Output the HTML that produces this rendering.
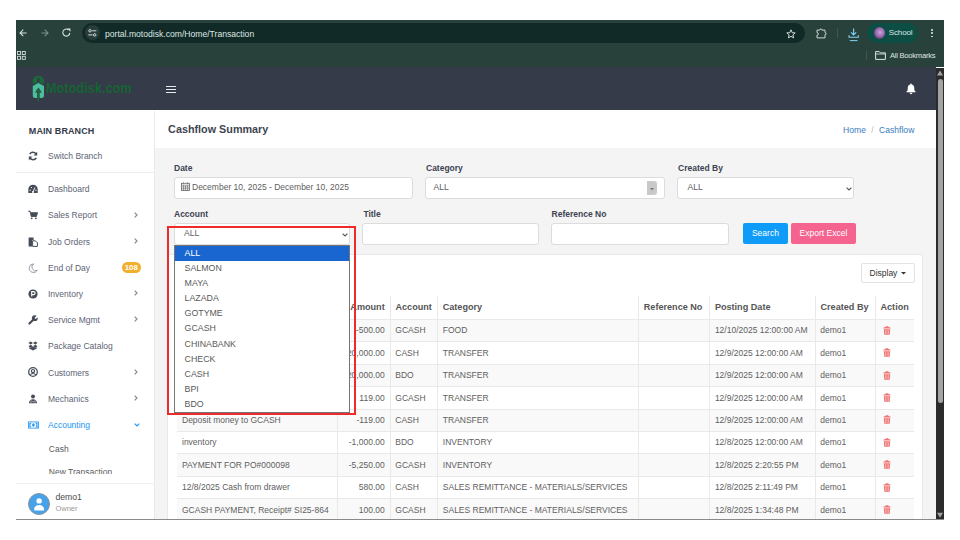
<!DOCTYPE html>
<html><head><meta charset="utf-8">
<style>
*{box-sizing:border-box;margin:0;padding:0}
html,body{width:960px;height:540px;overflow:hidden;background:#fff}
body{position:relative;font-family:"Liberation Sans",sans-serif}
.a{position:absolute}
.t{position:absolute;white-space:nowrap;line-height:1}
svg{position:absolute;overflow:visible}
</style></head><body>

<div class="a" style="left:16px;top:20px;width:928px;height:47.2px;background:#28413b;"></div>
<div class="a" style="left:82px;top:22.5px;width:723px;height:20px;background:#112a27;border-radius:10px;"></div>
<div class="a" style="left:84.5px;top:25px;width:15px;height:15px;background:#283d39;border-radius:50%;"></div>
<div class="t" style="left:105.00px;top:29.66px;font-size:8.6px;color:#dde5e2;">portal.motodisk.com/Home/Transaction</div>

<svg style="left:18.5px;top:28.5px" width="8" height="8" viewBox="0 0 8 8"><path d="M7.6 3.9H1.2M4.3 0.7L1 3.9L4.3 7.1" fill="none" stroke="#d9e2de" stroke-width="1.05"/></svg>
<svg style="left:40.5px;top:28.5px" width="8" height="8" viewBox="0 0 8 8"><path d="M0.4 3.9H6.8M3.7 0.7L7 3.9L3.7 7.1" fill="none" stroke="#7f928c" stroke-width="1.05"/></svg>
<svg style="left:62px;top:28.3px" width="9" height="9" viewBox="0 0 9 9"><path d="M7.8 4.9A3.5 3.5 0 1 1 6.3 1.7" fill="none" stroke="#d9e2de" stroke-width="1.1"/><path d="M5 0.4H8.4V3.8Z" fill="#d9e2de"/></svg>
<svg style="left:88.3px;top:29.3px" width="9" height="8" viewBox="0 0 9 8"><circle cx="2" cy="1.8" r="1.25" fill="none" stroke="#dfe6e3" stroke-width="0.9"/><path d="M4.2 1.8H8.4M0.3 5.9H4.6" stroke="#dfe6e3" stroke-width="0.95"/><circle cx="6.7" cy="5.9" r="1.25" fill="none" stroke="#dfe6e3" stroke-width="0.9"/></svg>
<svg style="left:785.5px;top:28.5px" width="10" height="10" viewBox="0 0 10 10"><path d="M5 0.8L6.2 3.7L9.2 3.9L6.9 5.9L7.6 8.9L5 7.3L2.4 8.9L3.1 5.9L0.8 3.9L3.8 3.7Z" fill="none" stroke="#e4ebe8" stroke-width="0.9" stroke-linejoin="round"/></svg>
<svg style="left:815.8px;top:27.5px" width="10" height="11" viewBox="0 0 10 11"><path d="M1 2.1H3.7A1.1 1.1 0 0 1 5.9 2.1H9V4.6A1.1 1.1 0 0 1 9 6.8V9.9H1V7.2A1.3 1.3 0 0 0 1 4.6Z" fill="none" stroke="#d5ded9" stroke-width="0.95" stroke-linejoin="round"/></svg>
<div class="a" style="left:837px;top:28px;width:1px;height:10px;background:#41564f"></div>
<svg style="left:848px;top:27.5px" width="12" height="14" viewBox="0 0 12 14"><path d="M5.6 0.6V6.8M3 4.3L5.6 6.9L8.2 4.3" fill="none" stroke="#7fd4f5" stroke-width="1.1"/><path d="M1 7.2V9.3H10.3V7.2" fill="none" stroke="#7fd4f5" stroke-width="1.1"/><path d="M1.8 12.6H9.5" stroke="#7fd4f5" stroke-width="1"/></svg>
<div class="a" style="left:867px;top:22.5px;width:51px;height:20.3px;border-radius:10px;background:#0c4e44"></div>
<div class="a" style="left:873.7px;top:26.5px;width:11.8px;height:12.3px;border-radius:50%;background:radial-gradient(circle at 55% 45%,#c9a6d8 0,#9a6cb3 45%,#6a3c6e 75%,#8a2838 100%)"></div>
<div class="a" style="left:930.8px;top:28.9px;width:1.8px;height:1.8px;border-radius:50%;background:#e4ebe8"></div>
<div class="a" style="left:930.8px;top:32.2px;width:1.8px;height:1.8px;border-radius:50%;background:#e4ebe8"></div>
<div class="a" style="left:930.8px;top:35.5px;width:1.8px;height:1.8px;border-radius:50%;background:#e4ebe8"></div>
<svg style="left:17px;top:51px" width="9" height="9" viewBox="0 0 9 9"><rect x="0.5" y="0.5" width="3" height="3" fill="none" stroke="#d5ddd9" stroke-width="0.9"/><rect x="5.3" y="0.5" width="3" height="3" fill="none" stroke="#d5ddd9" stroke-width="0.9"/><rect x="0.5" y="5.3" width="3" height="3" fill="none" stroke="#d5ddd9" stroke-width="0.9"/><rect x="5.3" y="5.3" width="3" height="3" fill="none" stroke="#d5ddd9" stroke-width="0.9"/></svg>
<div class="a" style="left:865.5px;top:51px;width:1px;height:9px;background:#41564f"></div>
<svg style="left:874.5px;top:51px" width="11" height="9" viewBox="0 0 11 9"><path d="M0.6 0.6h3.6l1.2 1.3h5v6.5H0.6Z" fill="none" stroke="#dfe6e3" stroke-width="1"/><path d="M0.6 3h9.8" stroke="#dfe6e3" stroke-width="0.8"/></svg>

<div class="t" style="left:888.80px;top:28.96px;font-size:8.0px;color:#d9e6e1;letter-spacing:-0.15px;">School</div>
<div class="t" style="left:890.00px;top:52.16px;font-size:7.6px;color:#dfe6e3;letter-spacing:-0.25px;">All Bookmarks</div>
<div class="a" style="left:16px;top:67.2px;width:920px;height:43.3px;background:#363b4a;"></div>
<svg style="left:32px;top:75px" width="13" height="27" viewBox="0 0 13 27">
<path d="M0.8 9.3V5.6C0.8 3 3.5 0.8 6.4 0.8C9.3 0.8 12 3 12 5.6V9.3L6.4 7.2Z" fill="#1a6a3a"/>
<path d="M5.1 7.3V3.9A1.3 1.3 0 0 1 7.7 3.9V7.3Z" fill="#363b4a"/>
<path d="M0.8 10.9L6.4 8.1L12 10.9V20.8C12 22.3 10.9 23 9.5 23H3.3C1.9 23 0.8 22.3 0.8 20.8Z" fill="#4bbf9c"/>
<path d="M6.4 12.5L3 17.4H5.2V26.3H7.6V17.4H9.8Z" fill="#363b4a"/>
<path d="M6.4 13.3L3.9 16.9H5.7V26.3H7.1V16.9H8.9Z" fill="#1a6a3a"/>
</svg>
<div class="t" style="left:46.4px;top:79.5px;font-size:15.5px;font-weight:bold;color:#156434;transform:scaleX(0.805);transform-origin:0 0;letter-spacing:0.2px">Motodisk.com</div>
<div class="a" style="left:166px;top:85.8px;width:10px;height:1.6px;background:#e8eaee;"></div>
<div class="a" style="left:166px;top:88.8px;width:10px;height:1.6px;background:#e8eaee;"></div>
<div class="a" style="left:166px;top:91.8px;width:10px;height:1.6px;background:#e8eaee;"></div>
<svg style="left:906px;top:83px" width="10" height="11" viewBox="0 0 10 11"><path d="M5 0.6C5.5 0.6 5.8 1 5.8 1.4C7.6 1.8 8.3 3.3 8.3 5V7.3L9.6 8.8V9.3H0.4V8.8L1.7 7.3V5C1.7 3.3 2.4 1.8 4.2 1.4C4.2 1 4.5 0.6 5 0.6Z" fill="#fff"/><path d="M3.6 9.8h2.8A1.4 1.4 0 0 1 3.6 9.8Z" fill="#fff"/></svg>
<div class="a" style="left:16px;top:110.5px;width:139px;height:408.5px;background:#fff;border-right:1px solid #e9e9e9;"></div>
<div class="t" style="left:28.80px;top:126.65px;font-size:9px;font-weight:bold;color:#343a47;letter-spacing:0.1px;">MAIN BRANCH</div>
<div class="t" style="left:48.00px;top:151.51px;font-size:8.5px;color:#5d6475;">Switch Branch</div>
<div class="a" style="left:16px;top:172px;width:139px;height:1px;background:#ececec;"></div>
<div class="t" style="left:48.00px;top:184.91px;font-size:8.5px;color:#5d6475;">Dashboard</div>
<div class="t" style="left:48.00px;top:211.21px;font-size:8.5px;color:#5d6475;">Sales Report</div>
<svg style="left:134px;top:211.50px" width="4" height="6" viewBox="0 0 4 6"><path d="M0.7 0.7L3 3L0.7 5.3" fill="none" stroke="#858b96" stroke-width="1.2"/></svg>
<div class="t" style="left:48.00px;top:237.61px;font-size:8.5px;color:#5d6475;">Job Orders</div>
<svg style="left:134px;top:237.90px" width="4" height="6" viewBox="0 0 4 6"><path d="M0.7 0.7L3 3L0.7 5.3" fill="none" stroke="#858b96" stroke-width="1.2"/></svg>
<div class="t" style="left:48.00px;top:263.91px;font-size:8.5px;color:#5d6475;">End of Day</div>
<div class="t" style="left:48.00px;top:290.11px;font-size:8.5px;color:#5d6475;">Inventory</div>
<svg style="left:134px;top:290.40px" width="4" height="6" viewBox="0 0 4 6"><path d="M0.7 0.7L3 3L0.7 5.3" fill="none" stroke="#858b96" stroke-width="1.2"/></svg>
<div class="t" style="left:48.00px;top:316.11px;font-size:8.5px;color:#5d6475;">Service Mgmt</div>
<svg style="left:134px;top:316.40px" width="4" height="6" viewBox="0 0 4 6"><path d="M0.7 0.7L3 3L0.7 5.3" fill="none" stroke="#858b96" stroke-width="1.2"/></svg>
<div class="t" style="left:48.00px;top:342.31px;font-size:8.5px;color:#5d6475;">Package Catalog</div>
<div class="t" style="left:48.00px;top:368.51px;font-size:8.5px;color:#5d6475;">Customers</div>
<svg style="left:134px;top:368.80px" width="4" height="6" viewBox="0 0 4 6"><path d="M0.7 0.7L3 3L0.7 5.3" fill="none" stroke="#858b96" stroke-width="1.2"/></svg>
<div class="t" style="left:48.00px;top:394.61px;font-size:8.5px;color:#5d6475;">Mechanics</div>
<svg style="left:134px;top:394.90px" width="4" height="6" viewBox="0 0 4 6"><path d="M0.7 0.7L3 3L0.7 5.3" fill="none" stroke="#858b96" stroke-width="1.2"/></svg>
<svg style="left:28.20px;top:150.80px" width="10" height="10" viewBox="0 0 10 10"><path d="M8.3 3.6A3.7 3.7 0 0 0 1.7 3.2M1.7 6.4A3.7 3.7 0 0 0 8.3 6.8" fill="none" stroke="#464c58" stroke-width="1.5"/><path d="M9.2 0.8V4.4H5.6Z M0.8 9.2V5.6H4.4Z" fill="#464c58"/></svg>
<svg style="left:28.20px;top:183.60px" width="10" height="10" viewBox="0 0 10 10"><path d="M0.3 9V5.4A4.7 4.7 0 0 1 9.7 5.4V9Z" fill="#464c58"/><path d="M5 8.2L6.8 3.6" stroke="#fff" stroke-width="0.9"/><circle cx="5" cy="8" r="1" fill="#fff"/><circle cx="2.2" cy="6.2" r="0.6" fill="#fff"/><circle cx="3.4" cy="3.5" r="0.6" fill="#fff"/><circle cx="7.9" cy="6.2" r="0.6" fill="#fff"/></svg>
<svg style="left:28.20px;top:210.00px" width="10" height="10" viewBox="0 0 10 10"><path d="M0.3 1.2H2.1L3.2 6.5H8.4L9.5 2.7H2.6" fill="#464c58" stroke="#464c58" stroke-width="0.9"/><circle cx="3.7" cy="8.3" r="0.9" fill="#464c58"/><circle cx="7.9" cy="8.3" r="0.9" fill="#464c58"/></svg>
<svg style="left:28.20px;top:236.50px" width="10" height="10" viewBox="0 0 10 10"><path d="M0.6 0.6H5.6V3.2H4V9.4H0.6Z" fill="#464c58"/><path d="M4.6 3.8H7.4L9.4 5.8V9.4H4.6Z" fill="none" stroke="#464c58" stroke-width="1"/></svg>
<svg style="left:28.20px;top:262.80px" width="10" height="10" viewBox="0 0 10 10"><path d="M5.8 0.9A4.3 4.3 0 1 0 9.3 7.3A3.6 3.6 0 0 1 5.8 0.9Z" fill="none" stroke="#8d929c" stroke-width="0.9"/></svg>
<svg style="left:28.20px;top:288.90px" width="10" height="10" viewBox="0 0 10 10"><circle cx="5" cy="5" r="4.6" fill="#464c58"/><path d="M3.7 7.6V2.6H5.6A1.5 1.5 0 0 1 5.6 5.6H3.7" fill="none" stroke="#fff" stroke-width="1.1"/></svg>
<svg style="left:28.20px;top:314.90px" width="10" height="10" viewBox="0 0 10 10"><path d="M1.4 8.6L5 5" stroke="#464c58" stroke-width="2.1" stroke-linecap="round"/><circle cx="6.8" cy="3.2" r="2.9" fill="#464c58"/><path d="M6.6 2.9L8.9 0.2L10.4 1.7L7.7 4Z" fill="#fff"/></svg>
<svg style="left:28.20px;top:341.20px" width="10" height="10" viewBox="0 0 10 10"><path d="M2.7 0.6L5 2.1L2.7 3.6L0.4 2.1Z M7.3 0.6L9.6 2.1L7.3 3.6L5 2.1Z M2.7 3.8L5 5.3L2.7 6.8L0.4 5.3Z M7.3 3.8L9.6 5.3L7.3 6.8L5 5.3Z M5 5.7L7.2 7.1L5 8.6L2.8 7.1Z" fill="#464c58"/><path d="M1.2 6.6V7.4L5 9.5L8.8 7.4V6.6" fill="#464c58"/></svg>
<svg style="left:28.20px;top:367.30px" width="10" height="10" viewBox="0 0 10 10"><circle cx="5" cy="5" r="4.3" fill="none" stroke="#464c58" stroke-width="1.3"/><circle cx="5" cy="4.1" r="1.6" fill="none" stroke="#464c58" stroke-width="1.2"/><path d="M2.3 8.1C2.9 6.9 3.8 6.5 5 6.5S7.1 6.9 7.7 8.1" fill="none" stroke="#464c58" stroke-width="1.2"/></svg>
<svg style="left:28.20px;top:393.50px" width="10" height="10" viewBox="0 0 10 10"><circle cx="5" cy="2.6" r="2" fill="#464c58"/><path d="M1 9.3C1 6.8 2.6 5.3 5 5.3S9 6.8 9 9.3Z" fill="#464c58"/><path d="M3 6.2v2.6M7 6.2v2.6M4.2 7.6h1.6" stroke="#fff" stroke-width="0.6"/></svg>
<svg style="left:27.70px;top:420.20px" width="11" height="10" viewBox="0 0 11 10"><rect x="0" y="1.5" width="10.8" height="7" fill="#2196f3"/><ellipse cx="5.4" cy="5" rx="3" ry="2.6" fill="#fff"/><ellipse cx="5.4" cy="5" rx="1.3" ry="1.8" fill="#2196f3"/><rect x="1.1" y="2.6" width="8.6" height="4.8" fill="none" stroke="#fff" stroke-width="0.5"/></svg>
<div class="a" style="left:122px;top:262.3px;width:18.5px;height:11.2px;background:#f2ae2d;border-radius:6px;"></div>
<div class="t" style="left:122px;top:264.11px;width:18.5px;text-align:center;font-size:7.8px;font-weight:bold;color:#fff">108</div>
<div class="t" style="left:48.00px;top:421.11px;font-size:8.5px;color:#2196f3;">Accounting</div>
<svg style="left:133.5px;top:423px" width="6" height="4" viewBox="0 0 6 4"><path d="M0.7 0.7L3 3L5.3 0.7" fill="none" stroke="#2196f3" stroke-width="1.2"/></svg>
<div class="t" style="left:48.80px;top:445.21px;font-size:8.5px;color:#5a5a5a;">Cash</div>
<div class="a" style="left:16px;top:466px;width:139px;height:7.8px;overflow:hidden"><div class="t" style="left:32.80px;top:1.81px;font-size:8.5px;color:#5a5a5a;">New Transaction</div></div>
<div class="a" style="left:16px;top:482.5px;width:139px;height:1px;background:#efefef;"></div>
<div class="a" style="left:27.6px;top:492.7px;width:22.2px;height:22.2px;border-radius:50%;background:#48a2e9;border:1px solid #8d939b;overflow:hidden"><svg style="left:0;top:0" width="20" height="20" viewBox="0 0 20 20"><circle cx="10.1" cy="6.9" r="2.7" fill="#fff"/><path d="M5.2 16.6V15C5.2 12.8 7.2 11.1 10.1 11.1S15 12.8 15 15V16.6Z" fill="#fff"/></svg></div>
<div class="t" style="left:55.40px;top:493.41px;font-size:8.7px;color:#4e4e4e;">demo1</div>
<div class="t" style="left:55.40px;top:504.61px;font-size:7.5px;color:#999;">Owner</div>
<div class="a" style="left:155px;top:110.5px;width:781px;height:37.6px;background:#fff;"></div>
<div class="a" style="left:155px;top:148.1px;width:781px;height:370.9px;background:#f4f4f4;"></div>
<div class="t" style="left:168.10px;top:124.25px;font-size:10.8px;font-weight:bold;color:#40464f;">Cashflow Summary</div>
<div class="t" style="left:843.00px;top:126.26px;font-size:8.6px;color:#3a7cc0;">Home</div>
<div class="t" style="left:871.20px;top:126.26px;font-size:8.6px;color:#b9b9b9;">/</div>
<div class="t" style="left:879.00px;top:126.26px;font-size:8.6px;color:#3a7cc0;">Cashflow</div>
<div class="t" style="left:174.00px;top:163.91px;font-size:8.5px;font-weight:bold;color:#3c4352;">Date</div>
<div class="t" style="left:426.00px;top:163.91px;font-size:8.5px;font-weight:bold;color:#3c4352;">Category</div>
<div class="t" style="left:678.00px;top:163.91px;font-size:8.5px;font-weight:bold;color:#3c4352;">Created By</div>
<div class="t" style="left:174.00px;top:210.11px;font-size:8.5px;font-weight:bold;color:#3c4352;">Account</div>
<div class="t" style="left:363.40px;top:210.11px;font-size:8.5px;font-weight:bold;color:#3c4352;">Title</div>
<div class="t" style="left:551.60px;top:210.11px;font-size:8.5px;font-weight:bold;color:#3c4352;">Reference No</div>
<div class="a" style="left:174px;top:177px;width:239px;height:21.5px;background:#fff;border:1px solid #dcdcdc;border-radius:3px;"></div>
<div class="a" style="left:425.2px;top:177px;width:239.8px;height:21.5px;background:#fff;border:1px solid #dcdcdc;border-radius:3px;"></div>
<div class="a" style="left:677.2px;top:177px;width:176.8px;height:21.5px;background:#fff;border:1px solid #dcdcdc;border-radius:3px;"></div>
<div class="a" style="left:173.9px;top:222.7px;width:176.6px;height:22.3px;background:#fff;border:1px solid #dcdcdc;border-radius:3px;"></div>
<div class="a" style="left:362.2px;top:222.8px;width:177.3px;height:22.2px;background:#fff;border:1px solid #dcdcdc;border-radius:3px;"></div>
<div class="a" style="left:551.2px;top:222.8px;width:177.4px;height:22.2px;background:#fff;border:1px solid #dcdcdc;border-radius:3px;"></div>
<svg style="left:181.3px;top:182.3px" width="9" height="9" viewBox="0 0 9 9"><rect x="0.5" y="1.3" width="8" height="7.2" fill="none" stroke="#666" stroke-width="0.8"/><path d="M0.5 3.2h8M2.5 0.3v2M6.5 0.3v2M0.5 5h8M0.5 6.8h8M2.5 3.2v5.3M4.5 3.2v5.3M6.5 3.2v5.3" stroke="#666" stroke-width="0.6"/></svg>
<div class="t" style="left:192.00px;top:182.51px;font-size:8.5px;color:#606060;">December 10, 2025 - December 10, 2025</div>
<div class="t" style="left:433.50px;top:182.66px;font-size:8.6px;color:#606060;">ALL</div>
<div class="a" style="left:646.6px;top:181px;width:10.6px;height:13.5px;background:#c9c9c9;border-radius:0 3px 3px 0;"></div>
<svg style="left:649.9px;top:188.2px" width="4" height="3" viewBox="0 0 4 3"><path d="M0 0h4L2 2.6z" fill="#7a7a7a"/></svg>
<div class="t" style="left:687.60px;top:182.66px;font-size:8.6px;color:#606060;">ALL</div>
<svg style="left:845.8px;top:186.6px" width="6" height="4" viewBox="0 0 6 4"><path d="M0.6 0.7L3 3L5.4 0.7" fill="none" stroke="#555" stroke-width="1.1"/></svg>
<svg style="left:342px;top:232.8px" width="6" height="4" viewBox="0 0 6 4"><path d="M0.6 0.7L3 3L5.4 0.7" fill="none" stroke="#555" stroke-width="1.1"/></svg>
<div class="t" style="left:184.00px;top:229.26px;font-size:8.6px;color:#606060;">ALL</div>
<div class="a" style="left:743px;top:223.4px;width:44.8px;height:20.4px;background:#0f9cf9;border-radius:2px;"></div>
<div class="t" style="left:743px;top:229.31px;width:44.8px;text-align:center;font-size:8.5px;color:#fff">Search</div>
<div class="a" style="left:790.6px;top:223.4px;width:65.7px;height:20.4px;background:#f5638f;border-radius:2px;"></div>
<div class="t" style="left:790.6px;top:229.31px;width:65.7px;text-align:center;font-size:8.5px;color:#fff">Export Excel</div>
<div class="a" style="left:167px;top:254.2px;width:756px;height:270px;background:#fff;border:1px solid #e8e8e8;border-radius:3px;"></div>
<div class="a" style="left:861.3px;top:263.3px;width:53.3px;height:19.8px;background:#fff;border:1px solid #e3e3e3;border-radius:2px;"></div>
<div class="t" style="left:869.50px;top:269.01px;font-size:8.5px;color:#333;">Display</div>
<svg style="left:900.5px;top:272px" width="5" height="3" viewBox="0 0 5 3"><path d="M0 0h5L2.5 2.5z" fill="#333"/></svg>
<div class="a" style="left:177px;top:319.5px;width:737.4px;height:22.4px;background:#f9f9f9;"></div>
<div class="a" style="left:177px;top:364.3px;width:737.4px;height:22.4px;background:#f9f9f9;"></div>
<div class="a" style="left:177px;top:409.1px;width:737.4px;height:22.4px;background:#f9f9f9;"></div>
<div class="a" style="left:177px;top:453.9px;width:737.4px;height:22.4px;background:#f9f9f9;"></div>
<div class="a" style="left:177px;top:498.7px;width:737.4px;height:22.4px;background:#f9f9f9;"></div>
<div class="a" style="left:177px;top:319.0px;width:737.4px;height:1px;background:#e9e9e9;"></div>
<div class="a" style="left:177px;top:341.4px;width:737.4px;height:1px;background:#e9e9e9;"></div>
<div class="a" style="left:177px;top:363.8px;width:737.4px;height:1px;background:#e9e9e9;"></div>
<div class="a" style="left:177px;top:386.2px;width:737.4px;height:1px;background:#e9e9e9;"></div>
<div class="a" style="left:177px;top:408.6px;width:737.4px;height:1px;background:#e9e9e9;"></div>
<div class="a" style="left:177px;top:431.0px;width:737.4px;height:1px;background:#e9e9e9;"></div>
<div class="a" style="left:177px;top:453.4px;width:737.4px;height:1px;background:#e9e9e9;"></div>
<div class="a" style="left:177px;top:475.79999999999995px;width:737.4px;height:1px;background:#e9e9e9;"></div>
<div class="a" style="left:177px;top:498.2px;width:737.4px;height:1px;background:#e9e9e9;"></div>
<div class="a" style="left:177px;top:520.6px;width:737.4px;height:1px;background:#e9e9e9;"></div>
<div class="a" style="left:337.0px;top:295.5px;width:1px;height:234.5px;background:#e9e9e9;"></div>
<div class="a" style="left:389.8px;top:295.5px;width:1px;height:234.5px;background:#e9e9e9;"></div>
<div class="a" style="left:437.0px;top:295.5px;width:1px;height:234.5px;background:#e9e9e9;"></div>
<div class="a" style="left:638.1px;top:295.5px;width:1px;height:234.5px;background:#e9e9e9;"></div>
<div class="a" style="left:709.2px;top:295.5px;width:1px;height:234.5px;background:#e9e9e9;"></div>
<div class="a" style="left:814.8px;top:295.5px;width:1px;height:234.5px;background:#e9e9e9;"></div>
<div class="a" style="left:874.8px;top:295.5px;width:1px;height:234.5px;background:#e9e9e9;"></div>
<div class="t" style="left:182.20px;top:303.00px;font-size:9.1px;font-weight:bold;color:#555;">Description</div>
<div class="t" style="right:575.30px;top:303.00px;font-size:9.1px;font-weight:bold;color:#555;">Amount</div>
<div class="t" style="left:395.50px;top:303.00px;font-size:9.1px;font-weight:bold;color:#555;">Account</div>
<div class="t" style="left:442.70px;top:303.00px;font-size:9.1px;font-weight:bold;color:#555;">Category</div>
<div class="t" style="left:643.80px;top:303.00px;font-size:9.1px;font-weight:bold;color:#555;">Reference No</div>
<div class="t" style="left:714.90px;top:303.00px;font-size:9.1px;font-weight:bold;color:#555;">Posting Date</div>
<div class="t" style="left:820.50px;top:303.00px;font-size:9.1px;font-weight:bold;color:#555;">Created By</div>
<div class="t" style="left:880.50px;top:303.00px;font-size:9.1px;font-weight:bold;color:#555;">Action</div>
<div class="t" style="left:182.00px;top:326.31px;font-size:8.5px;color:#606060;">Deposit money to GCASH</div>
<div class="t" style="right:575.30px;top:326.31px;font-size:8.5px;color:#606060;">-500.00</div>
<div class="t" style="left:395.30px;top:326.31px;font-size:8.5px;color:#606060;">GCASH</div>
<div class="t" style="left:442.80px;top:326.31px;font-size:8.5px;color:#606060;">FOOD</div>
<div class="t" style="left:714.90px;top:326.31px;font-size:8.5px;color:#606060;">12/10/2025 12:00:00 AM</div>
<div class="t" style="left:820.30px;top:326.31px;font-size:8.5px;color:#606060;">demo1</div>
<svg style="left:882.8px;top:325.70px" width="8" height="9" viewBox="0 0 8 9"><path d="M0.2 2.6Q0.3 1.1 2.4 1.1L2.9 0.2H5.1L5.6 1.1Q7.7 1.1 7.8 2.6Z" fill="#f07474"/><path d="M0.8 3.2H7.2L6.7 8.8H1.3Z" fill="#f07474"/><path d="M2.5 4.2V7.9M4 4.2V7.9M5.5 4.2V7.9" stroke="#fbd4d4" stroke-width="0.55"/></svg>
<div class="t" style="left:182.00px;top:348.71px;font-size:8.5px;color:#606060;">Withdraw from CASH</div>
<div class="t" style="right:575.30px;top:348.71px;font-size:8.5px;color:#606060;">-20,000.00</div>
<div class="t" style="left:395.30px;top:348.71px;font-size:8.5px;color:#606060;">CASH</div>
<div class="t" style="left:442.80px;top:348.71px;font-size:8.5px;color:#606060;">TRANSFER</div>
<div class="t" style="left:714.90px;top:348.71px;font-size:8.5px;color:#606060;">12/9/2025 12:00:00 AM</div>
<div class="t" style="left:820.30px;top:348.71px;font-size:8.5px;color:#606060;">demo1</div>
<svg style="left:882.8px;top:348.10px" width="8" height="9" viewBox="0 0 8 9"><path d="M0.2 2.6Q0.3 1.1 2.4 1.1L2.9 0.2H5.1L5.6 1.1Q7.7 1.1 7.8 2.6Z" fill="#f07474"/><path d="M0.8 3.2H7.2L6.7 8.8H1.3Z" fill="#f07474"/><path d="M2.5 4.2V7.9M4 4.2V7.9M5.5 4.2V7.9" stroke="#fbd4d4" stroke-width="0.55"/></svg>
<div class="t" style="left:182.00px;top:371.11px;font-size:8.5px;color:#606060;">Deposit to BDO</div>
<div class="t" style="right:575.30px;top:371.11px;font-size:8.5px;color:#606060;">20,000.00</div>
<div class="t" style="left:395.30px;top:371.11px;font-size:8.5px;color:#606060;">BDO</div>
<div class="t" style="left:442.80px;top:371.11px;font-size:8.5px;color:#606060;">TRANSFER</div>
<div class="t" style="left:714.90px;top:371.11px;font-size:8.5px;color:#606060;">12/9/2025 12:00:00 AM</div>
<div class="t" style="left:820.30px;top:371.11px;font-size:8.5px;color:#606060;">demo1</div>
<svg style="left:882.8px;top:370.50px" width="8" height="9" viewBox="0 0 8 9"><path d="M0.2 2.6Q0.3 1.1 2.4 1.1L2.9 0.2H5.1L5.6 1.1Q7.7 1.1 7.8 2.6Z" fill="#f07474"/><path d="M0.8 3.2H7.2L6.7 8.8H1.3Z" fill="#f07474"/><path d="M2.5 4.2V7.9M4 4.2V7.9M5.5 4.2V7.9" stroke="#fbd4d4" stroke-width="0.55"/></svg>
<div class="t" style="left:182.00px;top:393.51px;font-size:8.5px;color:#606060;">Deposit money to GCASH</div>
<div class="t" style="right:575.30px;top:393.51px;font-size:8.5px;color:#606060;">119.00</div>
<div class="t" style="left:395.30px;top:393.51px;font-size:8.5px;color:#606060;">GCASH</div>
<div class="t" style="left:442.80px;top:393.51px;font-size:8.5px;color:#606060;">TRANSFER</div>
<div class="t" style="left:714.90px;top:393.51px;font-size:8.5px;color:#606060;">12/9/2025 12:00:00 AM</div>
<div class="t" style="left:820.30px;top:393.51px;font-size:8.5px;color:#606060;">demo1</div>
<svg style="left:882.8px;top:392.90px" width="8" height="9" viewBox="0 0 8 9"><path d="M0.2 2.6Q0.3 1.1 2.4 1.1L2.9 0.2H5.1L5.6 1.1Q7.7 1.1 7.8 2.6Z" fill="#f07474"/><path d="M0.8 3.2H7.2L6.7 8.8H1.3Z" fill="#f07474"/><path d="M2.5 4.2V7.9M4 4.2V7.9M5.5 4.2V7.9" stroke="#fbd4d4" stroke-width="0.55"/></svg>
<div class="t" style="left:182.00px;top:415.91px;font-size:8.5px;color:#606060;">Deposit money to GCASH</div>
<div class="t" style="right:575.30px;top:415.91px;font-size:8.5px;color:#606060;">-119.00</div>
<div class="t" style="left:395.30px;top:415.91px;font-size:8.5px;color:#606060;">CASH</div>
<div class="t" style="left:442.80px;top:415.91px;font-size:8.5px;color:#606060;">TRANSFER</div>
<div class="t" style="left:714.90px;top:415.91px;font-size:8.5px;color:#606060;">12/9/2025 12:00:00 AM</div>
<div class="t" style="left:820.30px;top:415.91px;font-size:8.5px;color:#606060;">demo1</div>
<svg style="left:882.8px;top:415.30px" width="8" height="9" viewBox="0 0 8 9"><path d="M0.2 2.6Q0.3 1.1 2.4 1.1L2.9 0.2H5.1L5.6 1.1Q7.7 1.1 7.8 2.6Z" fill="#f07474"/><path d="M0.8 3.2H7.2L6.7 8.8H1.3Z" fill="#f07474"/><path d="M2.5 4.2V7.9M4 4.2V7.9M5.5 4.2V7.9" stroke="#fbd4d4" stroke-width="0.55"/></svg>
<div class="t" style="left:182.00px;top:438.31px;font-size:8.5px;color:#606060;">inventory</div>
<div class="t" style="right:575.30px;top:438.31px;font-size:8.5px;color:#606060;">-1,000.00</div>
<div class="t" style="left:395.30px;top:438.31px;font-size:8.5px;color:#606060;">BDO</div>
<div class="t" style="left:442.80px;top:438.31px;font-size:8.5px;color:#606060;">INVENTORY</div>
<div class="t" style="left:714.90px;top:438.31px;font-size:8.5px;color:#606060;">12/8/2025 12:00:00 AM</div>
<div class="t" style="left:820.30px;top:438.31px;font-size:8.5px;color:#606060;">demo1</div>
<svg style="left:882.8px;top:437.70px" width="8" height="9" viewBox="0 0 8 9"><path d="M0.2 2.6Q0.3 1.1 2.4 1.1L2.9 0.2H5.1L5.6 1.1Q7.7 1.1 7.8 2.6Z" fill="#f07474"/><path d="M0.8 3.2H7.2L6.7 8.8H1.3Z" fill="#f07474"/><path d="M2.5 4.2V7.9M4 4.2V7.9M5.5 4.2V7.9" stroke="#fbd4d4" stroke-width="0.55"/></svg>
<div class="t" style="left:182.00px;top:460.71px;font-size:8.5px;color:#606060;">PAYMENT FOR PO#000098</div>
<div class="t" style="right:575.30px;top:460.71px;font-size:8.5px;color:#606060;">-5,250.00</div>
<div class="t" style="left:395.30px;top:460.71px;font-size:8.5px;color:#606060;">GCASH</div>
<div class="t" style="left:442.80px;top:460.71px;font-size:8.5px;color:#606060;">INVENTORY</div>
<div class="t" style="left:714.90px;top:460.71px;font-size:8.5px;color:#606060;">12/8/2025 2:20:55 PM</div>
<div class="t" style="left:820.30px;top:460.71px;font-size:8.5px;color:#606060;">demo1</div>
<svg style="left:882.8px;top:460.10px" width="8" height="9" viewBox="0 0 8 9"><path d="M0.2 2.6Q0.3 1.1 2.4 1.1L2.9 0.2H5.1L5.6 1.1Q7.7 1.1 7.8 2.6Z" fill="#f07474"/><path d="M0.8 3.2H7.2L6.7 8.8H1.3Z" fill="#f07474"/><path d="M2.5 4.2V7.9M4 4.2V7.9M5.5 4.2V7.9" stroke="#fbd4d4" stroke-width="0.55"/></svg>
<div class="t" style="left:182.00px;top:483.11px;font-size:8.5px;color:#606060;">12/8/2025 Cash from drawer</div>
<div class="t" style="right:575.30px;top:483.11px;font-size:8.5px;color:#606060;">580.00</div>
<div class="t" style="left:395.30px;top:483.11px;font-size:8.5px;color:#606060;">CASH</div>
<div class="t" style="left:442.80px;top:483.11px;font-size:8.5px;color:#606060;">SALES REMITTANCE - MATERIALS/SERVICES</div>
<div class="t" style="left:714.90px;top:483.11px;font-size:8.5px;color:#606060;">12/8/2025 2:11:49 PM</div>
<div class="t" style="left:820.30px;top:483.11px;font-size:8.5px;color:#606060;">demo1</div>
<svg style="left:882.8px;top:482.50px" width="8" height="9" viewBox="0 0 8 9"><path d="M0.2 2.6Q0.3 1.1 2.4 1.1L2.9 0.2H5.1L5.6 1.1Q7.7 1.1 7.8 2.6Z" fill="#f07474"/><path d="M0.8 3.2H7.2L6.7 8.8H1.3Z" fill="#f07474"/><path d="M2.5 4.2V7.9M4 4.2V7.9M5.5 4.2V7.9" stroke="#fbd4d4" stroke-width="0.55"/></svg>
<div class="t" style="left:182.00px;top:505.51px;font-size:8.5px;color:#606060;">GCASH PAYMENT, Receipt# SI25-864</div>
<div class="t" style="right:575.30px;top:505.51px;font-size:8.5px;color:#606060;">100.00</div>
<div class="t" style="left:395.30px;top:505.51px;font-size:8.5px;color:#606060;">GCASH</div>
<div class="t" style="left:442.80px;top:505.51px;font-size:8.5px;color:#606060;">SALES REMITTANCE - MATERIALS/SERVICES</div>
<div class="t" style="left:714.90px;top:505.51px;font-size:8.5px;color:#606060;">12/8/2025 1:34:48 PM</div>
<div class="t" style="left:820.30px;top:505.51px;font-size:8.5px;color:#606060;">demo1</div>
<svg style="left:882.8px;top:504.90px" width="8" height="9" viewBox="0 0 8 9"><path d="M0.2 2.6Q0.3 1.1 2.4 1.1L2.9 0.2H5.1L5.6 1.1Q7.7 1.1 7.8 2.6Z" fill="#f07474"/><path d="M0.8 3.2H7.2L6.7 8.8H1.3Z" fill="#f07474"/><path d="M2.5 4.2V7.9M4 4.2V7.9M5.5 4.2V7.9" stroke="#fbd4d4" stroke-width="0.55"/></svg>
<div class="a" style="left:174.4px;top:245px;width:176.1px;height:167.5px;background:#fff;border:1px solid #767676;"></div>
<div class="a" style="left:175.4px;top:245.5px;width:174.1px;height:15.3px;background:#1a66d1;"></div>
<div class="t" style="left:184.60px;top:248.96px;font-size:8.8px;color:#fff;">ALL</div>
<div class="t" style="left:184.60px;top:264.06px;font-size:8.8px;color:#5a5a5a;">SALMON</div>
<div class="t" style="left:184.60px;top:279.16px;font-size:8.8px;color:#5a5a5a;">MAYA</div>
<div class="t" style="left:184.60px;top:294.26px;font-size:8.8px;color:#5a5a5a;">LAZADA</div>
<div class="t" style="left:184.60px;top:309.36px;font-size:8.8px;color:#5a5a5a;">GOTYME</div>
<div class="t" style="left:184.60px;top:324.46px;font-size:8.8px;color:#5a5a5a;">GCASH</div>
<div class="t" style="left:184.60px;top:339.56px;font-size:8.8px;color:#5a5a5a;">CHINABANK</div>
<div class="t" style="left:184.60px;top:354.66px;font-size:8.8px;color:#5a5a5a;">CHECK</div>
<div class="t" style="left:184.60px;top:369.76px;font-size:8.8px;color:#5a5a5a;">CASH</div>
<div class="t" style="left:184.60px;top:384.86px;font-size:8.8px;color:#5a5a5a;">BPI</div>
<div class="t" style="left:184.60px;top:399.96px;font-size:8.8px;color:#5a5a5a;">BDO</div>
<div class="a" style="left:166.5px;top:226px;width:189.3px;height:188.8px;border:2px solid #ee2a2a"></div>
<div class="a" style="left:936px;top:67.5px;width:8px;height:451.5px;background:#2b2b2b;"></div>
<div class="a" style="left:937.5px;top:79px;width:5.5px;height:323.5px;background:#a3a3a3;border-radius:3px;"></div>
<svg style="left:936px;top:69px" width="8" height="8" viewBox="0 0 8 8"><path d="M1 6.5L4 1.5L7 6.5Z" fill="#a3a3a3"/></svg>
<svg style="left:936px;top:511px" width="8" height="8" viewBox="0 0 8 8"><path d="M1 1.8L4 6.8L7 1.8Z" fill="#a3a3a3"/></svg>
<div class="a" style="left:0px;top:519px;width:960px;height:21px;background:#fff;"></div>
<div class="a" style="left:16px;top:519px;width:928px;height:1px;background:#8a8a8a;"></div>
</body></html>
